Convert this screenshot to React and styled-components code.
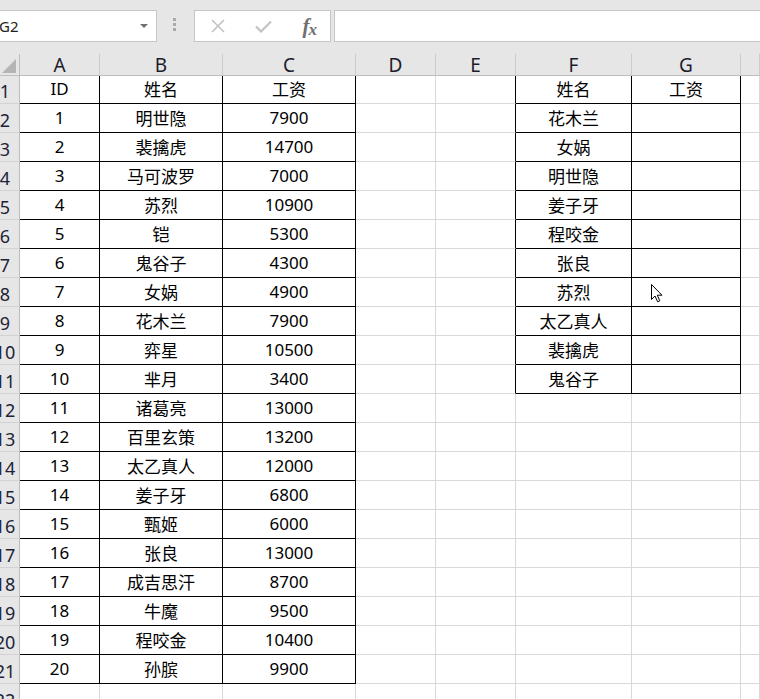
import styled, { createGlobalStyle } from "styled-components";

const GRID = "#d9d9d9";
const INK = "#000";

const COLS = [20, 80, 123, 133, 80, 80, 116, 109];
const LETTERS = ["A", "B", "C", "D", "E", "F", "G", "H"];

const people = [
  ["明世隐", 7900],
  ["裴擒虎", 14700],
  ["马可波罗", 7000],
  ["苏烈", 10900],
  ["铠", 5300],
  ["鬼谷子", 4300],
  ["女娲", 4900],
  ["花木兰", 7900],
  ["弈星", 10500],
  ["芈月", 3400],
  ["诸葛亮", 13000],
  ["百里玄策", 13200],
  ["太乙真人", 12000],
  ["姜子牙", 6800],
  ["甄姬", 6000],
  ["张良", 13000],
  ["成吉思汗", 8700],
  ["牛魔", 9500],
  ["程咬金", 10400],
  ["孙膑", 9900],
];

const lookup = ["花木兰", "女娲", "明世隐", "姜子牙", "程咬金", "张良", "苏烈", "太乙真人", "裴擒虎", "鬼谷子"];

// row 1..22, col 0..7 (A..H)
const valueAt = (r, c) => {
  if (r === 1) {
    return ["ID", "姓名", "工资", "", "", "姓名", "工资", ""][c];
  }
  const p = people[r - 2];
  if (p && c === 0) return r - 1;
  if (p && c === 1) return p[0];
  if (p && c === 2) return p[1];
  if (c === 5 && lookup[r - 2]) return lookup[r - 2];
  return "";
};

const inTable = (r, c) =>
  (c >= 0 && c <= 2 && r >= 1 && r <= 21) || (c >= 5 && c <= 6 && r >= 1 && r <= 11);

const ROWS = Array.from({ length: 22 }, (_, i) => i + 1);

const GlobalStyle = createGlobalStyle`
  html, body {
    margin: 0;
    padding: 0;
    background: #fff;
    overflow: hidden;
  }
`;

const Window = styled.div`
  position: relative;
  width: 760px;
  height: 699px;
  overflow: hidden;
  display: flex;
  flex-direction: column;
  font-family: "Noto Sans", "Noto Sans CJK SC", sans-serif;
  color: #000;
`;

const FormulaBar = styled.div`
  height: 54px;
  flex-shrink: 0;
  box-sizing: border-box;
  padding-top: 10px;
  background: #e6e6e6;
  display: flex;
  align-items: flex-start;
`;

const Box = styled.div`
  box-sizing: border-box;
  height: 32px;
  background: #fff;
  border: 1px solid #c6c6c6;
  display: flex;
  align-items: center;
`;

const NameBox = styled(Box)`
  width: 158px;
  margin-left: -1px;
  justify-content: space-between;
  padding-right: 8px;
  font-size: 15px;
  color: #222;
`;

const NameText = styled.span`
  margin-left: -1px;
`;

const DropArrow = styled.span`
  width: 0;
  height: 0;
  border-left: 4px solid transparent;
  border-right: 4px solid transparent;
  border-top: 4px solid #6f6f6f;
`;

const Grip = styled.div`
  width: 4px;
  margin: 8px 17px 0 16px;
  display: flex;
  flex-direction: column;
  gap: 2px;
  span {
    width: 3px;
    height: 3px;
    background: #a9a9a9;
  }
`;

const FxBox = styled(Box)`
  width: 137px;
  justify-content: space-between;
  padding: 0 14px 0 16px;
`;

const FxLabel = styled.span`
  font-family: "Liberation Serif", serif;
  font-style: italic;
  font-weight: bold;
  font-size: 21px;
  line-height: 1;
  color: #707070;
  letter-spacing: -1px;
  small {
    font-size: 17px;
    position: relative;
    top: 2px;
  }
`;

const FormulaInput = styled(Box)`
  flex: 1;
  margin-left: 3px;
  margin-right: -2px;
`;

const Sheet = styled.div`
  flex: 1;
  display: grid;
  grid-template-columns: ${COLS.map((w) => `${w}px`).join(" ")} 1fr;
  grid-template-rows: 22px 28px repeat(21, 29px);
  overflow: hidden;
`;

const Head = styled.div`
  box-sizing: border-box;
  background: #e6e6e6;
  border-right: 1px solid #cbcbcb;
  border-bottom: 1px solid #bdbdbd;
  display: flex;
  align-items: center;
  justify-content: center;
  font-size: 19px;
  line-height: 21px;
  padding-top: 1px;
  color: #1c1c2a;
`;

const Corner = styled(Head)`
  position: relative;
  border-right-color: #bdbdbd;
  &::after {
    content: "";
    position: absolute;
    right: 3px;
    bottom: 2px;
    width: 0;
    height: 0;
    border-left: 14px solid transparent;
    border-bottom: 14px solid #b4b4b4;
  }
`;

const RowHead = styled.div`
  box-sizing: border-box;
  background: #e6e6e6;
  border-right: 1px solid #bdbdbd;
  border-bottom: 1px solid #d2d2d2;
  display: flex;
  align-items: flex-end;
  overflow: hidden;
`;

const RowNum = styled.span`
  flex-shrink: 0;
  width: 32px;
  margin-left: -11px;
  padding-bottom: 1px;
  text-align: center;
  font-size: 18px;
  line-height: 1.1;
  color: #1d2438;
`;

const Cell = styled.div`
  box-sizing: border-box;
  border-right: 1px solid ${(p) => (p.$right ? INK : GRID)};
  border-bottom: 1px solid ${(p) => (p.$bottom ? INK : GRID)};
  display: flex;
  align-items: center;
  justify-content: center;
  padding-bottom: 2px;
  font-size: 17px;
  white-space: nowrap;
  overflow: hidden;
`;

const Pointer = styled.svg`
  position: absolute;
  left: 651px;
  top: 284px;
`;

const CrossIcon = () => (
  <svg width="14" height="14" viewBox="0 0 14 14">
    <path d="M1 1 L13 13 M13 1 L1 13" stroke="#c2c2c2" strokeWidth="1.6" fill="none" />
  </svg>
);

const CheckIcon = () => (
  <svg width="17" height="13" viewBox="0 0 17 13">
    <path d="M1 6.5 L6 11.5 L16 1.5" stroke="#c2c2c2" strokeWidth="2.2" fill="none" />
  </svg>
);

export default function App() {
  return (
    <Window>
      <GlobalStyle />
      <FormulaBar>
        <NameBox>
          <NameText>G2</NameText>
          <DropArrow />
        </NameBox>
        <Grip>
          <span />
          <span />
          <span />
        </Grip>
        <FxBox>
          <CrossIcon />
          <CheckIcon />
          <FxLabel>
            f<small>x</small>
          </FxLabel>
        </FxBox>
        <FormulaInput />
      </FormulaBar>

      <Sheet>
        <Corner />
        {LETTERS.map((l) => (
          <Head key={l}>{l === "H" ? "" : l}</Head>
        ))}
        {ROWS.map((r) => [
          <RowHead key={`h${r}`}>
            <RowNum>{r}</RowNum>
          </RowHead>,
          ...LETTERS.map((l, c) => (
            <Cell
              key={`${l}${r}`}
              $right={inTable(r, c) || inTable(r, c + 1)}
              $bottom={inTable(r, c) || inTable(r + 1, c)}
            >
              {valueAt(r, c)}
            </Cell>
          )),
        ])}
      </Sheet>

      <Pointer width="14" height="20" viewBox="0 0 14 20">
        <path
          d="M0.5 0.5 L0.5 15.5 L4 12 L6.6 17.8 L8.8 16.8 L6.3 11.2 L11 11.2 Z"
          fill="#fff"
          stroke="#000"
          strokeWidth="1"
          strokeLinejoin="round"
        />
      </Pointer>
    </Window>
  );
}
